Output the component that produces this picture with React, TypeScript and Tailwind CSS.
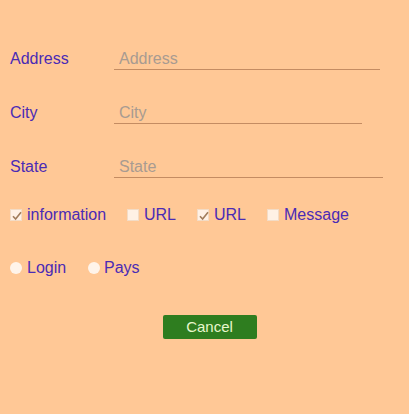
import React from "react";

// single form panel: address fields, options and a cancel button
const fields = [
  { label: "Address", width: "w-[266px]", mt: "mt-[47px]" },
  { label: "City", width: "w-[248px]", mt: "mt-[30px]" },
  { label: "State", width: "w-[269px]", mt: "mt-[30px]" },
];

const Box: React.FC<{ checked?: boolean }> = ({ checked }) => (
  <span className="relative inline-block w-[12px] h-[12px] bg-white/75 border border-[#f3dcc6] shrink-0">
    {checked && (
      <svg viewBox="0 0 12 12" className="absolute inset-0 w-[12px] h-[12px]">
        <path d="M2 6.2 L4.6 9 L10 2.2" fill="none" stroke="#a27d5c" strokeWidth="1.6" />
      </svg>
    )}
  </span>
);

const Radio: React.FC = () => (
  <span className="inline-block w-[12px] h-[12px] rounded-full bg-white/80 shrink-0" />
);

const App: React.FC = () => {
  const checks = [
    { label: "information", checked: true, w: "w-[117px]" },
    { label: "URL", checked: false, w: "w-[70px]" },
    { label: "URL", checked: true, w: "w-[70px]" },
    { label: "Message", checked: false, w: "" },
  ];

  return (
    <div
      className="w-[409px] h-[414px] bg-[#ffc896] text-[16px] text-[#4a2bb5] flex flex-col"
      style={{ fontFamily: '"Liberation Sans", Arial, sans-serif' }}
    >
      {fields.map((f) => (
        <div key={f.label} className={`flex items-center pl-[10px] ${f.mt}`}>
          <label className="w-[104px]">{f.label}</label>
          <input
            type="text"
            placeholder={f.label}
            className={`${f.width} h-[22px] bg-transparent border-b border-[#c48c62] px-[5px] outline-none placeholder:text-[#a89b91]`}
          />
        </div>
      ))}

      <div className="flex items-center pl-[10px] mt-[27px] h-[18px]">
        {checks.map((c, i) => (
          <div key={i} className={`flex items-center gap-[5px] ${c.w}`}>
            <Box checked={c.checked} />
            <span>{c.label}</span>
          </div>
        ))}
      </div>

      <div className="flex items-center pl-[10px] mt-[35px] h-[18px]">
        <div className="flex items-center gap-[5px] w-[78px]">
          <Radio />
          <span>Login</span>
        </div>
        <div className="flex items-center gap-[4px]">
          <Radio />
          <span>Pays</span>
        </div>
      </div>

      <div className="flex justify-center mt-[38px] pl-[10px]">
        <button className="w-[94px] h-[24px] bg-[#2e7d1f] text-[#e8f7cc] text-[15px] rounded-[2px]">
          Cancel
        </button>
      </div>
    </div>
  );
};

export default App;
